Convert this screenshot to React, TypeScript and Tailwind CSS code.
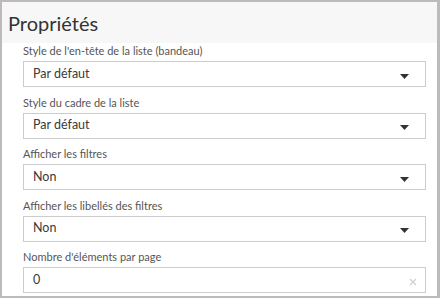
import React from 'react';

type Field = { label: string; value: string; kind: 'select' | 'input' };

const fields: Field[] = [
  { label: "Style de l'en-tête de la liste (bandeau)", value: 'Par défaut', kind: 'select' },
  { label: 'Style du cadre de la liste', value: 'Par défaut', kind: 'select' },
  { label: 'Afficher les filtres', value: 'Non', kind: 'select' },
  { label: 'Afficher les libellés des filtres', value: 'Non', kind: 'select' },
  { label: "Nombre d'éléments par page", value: '0', kind: 'input' },
];

function Caret() {
  return (
    <svg width="9" height="5" viewBox="0 0 9 5" className="mt-[4px]">
      <path d="M0 0 H9 L4.5 5 Z" fill="#333" />
    </svg>
  );
}

function Clear() {
  return (
    <svg width="8" height="8" viewBox="0 0 8 8" className="mt-[3px]">
      <path d="M1 1 L7 7 M7 1 L1 7" stroke="#d0d0d0" strokeWidth="1.3" />
    </svg>
  );
}

export default function App() {
  return (
    <div
      className="w-[440px] h-[298px] bg-[#bdb9bc] pt-[2px] pl-[2px] pr-[3px] pb-[2px] overflow-hidden"
      style={{ fontFamily: 'Lato, "Open Sans", sans-serif' }}
    >
      <div className="h-full bg-white flex flex-col">
        <div className="h-[41px] bg-[#f7f7f7] flex items-center pl-[6px]">
          <h1 className="text-[20px] text-[#333] leading-none">Propriétés</h1>
        </div>
        <div className="flex flex-col pl-[21px] pr-[11px] pt-[1px] gap-[8.5px]">
          {fields.map(f => (
            <div key={f.label} className="flex flex-col">
              <label className="text-[11px] leading-[14px] text-[#555] h-[17px]">{f.label}</label>
              <div className="h-[26px] border border-[#cccccc] flex items-center justify-between pl-[9px] pr-[16px]">
                <span className="text-[12.5px] text-[#3a3a3a]">{f.value}</span>
                {f.kind === 'select' ? <Caret /> : <span className="-mr-[8px]"><Clear /></span>}
              </div>
            </div>
          ))}
        </div>
      </div>
    </div>
  );
}
